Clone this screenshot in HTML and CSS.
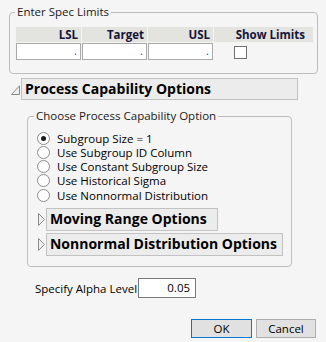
FILE: index.html
```html
<!DOCTYPE html>
<html>
<head>
<meta charset="utf-8">
<link rel="stylesheet" href="styles.css">
</head>
<body>
<div class="dlg">
  <fieldset class="grp spec">
    <legend>Enter Spec Limits</legend>
    <div class="spec-table">
      <div class="th">LSL</div>
      <div class="th">Target</div>
      <div class="th">USL</div>
      <div class="th th-show">Show Limits</div>
      <div class="cell"><span class="miss">.</span></div>
      <div class="cell"><span class="miss">.</span></div>
      <div class="cell"><span class="miss">.</span></div>
      <div class="chk-cell"><span class="chk"></span></div>
    </div>
  </fieldset>

  <div class="outline">
    <svg class="tri-open" width="9" height="10" viewBox="0 0 9 10"><path d="M8.5 0.8 L8.5 9.5 L0.5 9.5 Z" fill="#f0f0f0" stroke="#8a8a8a" stroke-width="1"/></svg>
    <div class="ohead">Process Capability Options</div>
  </div>

  <fieldset class="grp choose">
    <legend>Choose Process Capability Option</legend>
    <div class="radios">
      <div class="radio"><span class="rb on"></span>Subgroup Size = 1</div>
      <div class="radio"><span class="rb"></span>Use Subgroup ID Column</div>
      <div class="radio"><span class="rb"></span>Use Constant Subgroup Size</div>
      <div class="radio"><span class="rb"></span>Use Historical Sigma</div>
      <div class="radio"><span class="rb"></span>Use Nonnormal Distribution</div>
    </div>
    <div class="sub">
      <svg class="tri-closed" width="7" height="13" viewBox="0 0 7 13"><path d="M0.5 0.5 L6.5 6.5 L0.5 12.5 Z" fill="#f0f0f0" stroke="#8a8a8a" stroke-width="1"/></svg>
      <div class="shead w1">Moving Range Options</div>
    </div>
    <div class="sub">
      <svg class="tri-closed" width="7" height="13" viewBox="0 0 7 13"><path d="M0.5 0.5 L6.5 6.5 L0.5 12.5 Z" fill="#f0f0f0" stroke="#8a8a8a" stroke-width="1"/></svg>
      <div class="shead w2">Nonnormal Distribution Options</div>
    </div>
  </fieldset>

  <div class="alpha">
    <span class="alpha-label">Specify Alpha Level</span>
    <div class="alpha-input">0.05</div>
  </div>

  <div class="buttons">
    <div class="btn btn-def">OK</div>
    <div class="btn">Cancel</div>
  </div>
</div>
</body>
</html>
```

FILE: styles.css
```css
* { box-sizing: border-box; }
html, body { margin: 0; padding: 0; }
body {
  background: #f5f5f5;
  font-family: "Open Sans", "Noto Sans", sans-serif;
  font-size: 11.5px;
  color: #000;
  width: 326px;
  height: 342px;
  overflow: hidden;
}
.dlg { padding-top: 5px; }

.grp {
  margin: 0;
  border: 1px solid #bdbdbd;
  border-radius: 4px;
  min-width: 0;
}
.grp legend {
  padding: 0 2px;
  margin-left: -1px;
  height: 14px;
  line-height: 14px;
  color: #1a1a1a;
}

.spec {
  margin-left: 9px;
  width: 309px;
  padding: 8px 6px 13px 6px;
}
.spec-table {
  display: grid;
  grid-template-columns: 65px 65px 65px 99px;
  grid-auto-rows: auto;
  column-gap: 1px;
  row-gap: 1px;
}
.th {
  background: #e3e3df;
  height: 15px;
  line-height: 15px;
  font-weight: bold;
  text-align: right;
  padding-right: 3px;
  color: #15153a;
}
.th-show { padding-right: 8px; }
.cell {
  height: 17px;
  background: #fff;
  border: 1px solid #a9a9a9;
  text-align: right;
  padding-right: 3px;
  line-height: 14px;
}
.miss { color: #2040c0; font-size: 11px; }
.chk-cell { padding: 3px 0 0 20px; }
.chk {
  display: block;
  width: 13px;
  height: 13px;
  background: #fff;
  border: 1px solid #707070;
}

.outline {
  display: flex;
  align-items: center;
  margin: 4px 0 0 11px;
}
.tri-open { margin-right: 1px; margin-top: 2px; }
.ohead {
  width: 277px;
  height: 22px;
  background: #ececec;
  border: 1px solid #c2c2c2;
  font-weight: bold;
  font-size: 14px;
  line-height: 19px;
  padding-left: 3px;
  color: #000;
}

.choose {
  margin: 9px 0 0 27px;
  width: 265px;
  padding: 8px 8px 10px 8px;
}
.choose legend { margin-left: -2px; }
.radios { margin-left: 1px; }
.radio {
  display: flex;
  align-items: center;
  height: 14.25px;
}
.rb {
  width: 13px;
  height: 13px;
  border-radius: 50%;
  border: 1px solid #8c8c8c;
  background: #fff;
  margin-right: 7px;
  position: relative;
  flex: none;
}
.rb.on::after {
  content: "";
  position: absolute;
  left: 3px;
  top: 3px;
  width: 5px;
  height: 5px;
  border-radius: 50%;
  background: #1a1a1a;
}

.sub {
  display: flex;
  align-items: center;
  margin-left: 2px;
  margin-top: 6px;
}
.sub + .sub { margin-top: 2px; }
.tri-closed { margin-right: 1px; }
.shead {
  height: 23px;
  background: #ececec;
  border: 1px solid #c2c2c2;
  font-weight: bold;
  font-size: 14px;
  line-height: 20px;
  padding-left: 3px;
}
.w1 { width: 172px; }
.w2 { width: 238px; }

.alpha {
  display: flex;
  align-items: center;
  margin: 11px 0 0 35px;
}
.alpha-label { margin-right: 1px; }
.alpha-input {
  width: 58px;
  height: 20px;
  background: #fff;
  border: 1px solid #7a7a7a;
  text-align: right;
  padding-right: 5px;
  line-height: 18px;
}

.buttons {
  display: flex;
  justify-content: flex-end;
  gap: 4px;
  padding-right: 10px;
  margin-top: 21px;
}
.btn {
  width: 60px;
  height: 19px;
  background: #e1e1e1;
  border: 1px solid #adadad;
  text-align: center;
  line-height: 17px;
}
.btn-def { width: 61px; border-color: #0078d7; }
```
